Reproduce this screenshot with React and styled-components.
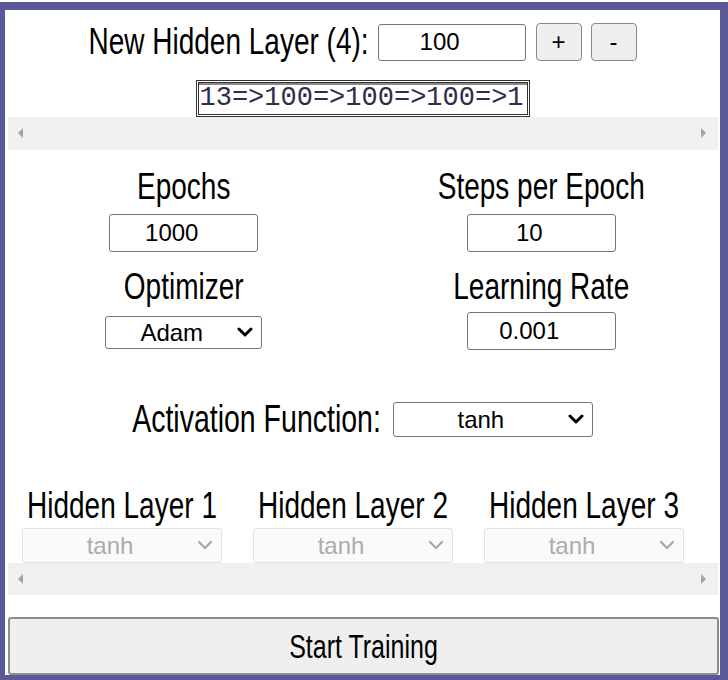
import React from "react";
import styled, { createGlobalStyle } from "styled-components";

const GlobalStyle = createGlobalStyle`
  html, body {
    margin: 0;
    padding: 0;
    background: #fff;
  }
  body {
    font-family: "Liberation Sans", Arial, sans-serif;
    color: #000;
  }
`;

const Frame = styled.div`
  box-sizing: border-box;
  margin-top: 2px;
  height: 678px;
  border-style: solid;
  border-color: #5a5896;
  border-width: 8px 8px 5px 5px;
  display: flex;
  flex-direction: column;
  overflow: hidden;
`;

// the screenshot is stretched vertically, so the text is too
const Label = styled.span`
  display: inline-block;
  font-size: ${(p) => p.$size || 28}px;
  line-height: 32px;
  white-space: nowrap;
  transform: scaleY(1.35);
  color: ${(p) => p.$color || "#000"};
`;

const TopRow = styled.div`
  display: flex;
  justify-content: center;
  align-items: center;
  margin-top: 13px;
  height: 38px;
`;

const NumberInput = styled.input`
  box-sizing: border-box;
  width: ${(p) => p.$w}px;
  height: ${(p) => p.$h}px;
  margin-left: ${(p) => p.$ml || 0}px;
  border: 1px solid #767676;
  border-radius: 3px;
  background: #fff;
  font-family: "Liberation Sans", Arial, sans-serif;
  font-size: 24px;
  color: #000;
  text-align: center;
  padding: 0 26px 0 2px;
  outline: none;
`;

const SmallButton = styled.button`
  box-sizing: border-box;
  width: 46px;
  height: 38px;
  margin-left: ${(p) => p.$ml}px;
  background: #efefef;
  border: 1.5px solid #8a8a8a;
  border-radius: 4px;
  font-family: "Liberation Sans", Arial, sans-serif;
  font-size: 24px;
  color: #000;
  padding: 0;
`;

const ArchBox = styled.div`
  box-sizing: border-box;
  margin: 19px auto 0;
  width: 334px;
  height: 37px;
  border: 3px double #333;
  box-shadow: inset 0 2px 0 #8a8a8a;
  font-family: "Liberation Mono", "Courier New", monospace;
  font-size: 27px;
  line-height: 31px;
  color: #2e2e4a;
  padding-left: 1px;
  white-space: nowrap;
  overflow: hidden;
`;

const ScrollTrack = styled.div`
  height: 33px;
  margin: 0 2px 0 3px;
  background: #f0f0f0;
  display: flex;
  justify-content: space-between;
  align-items: center;
  padding: 0 12px 0 10px;
`;

const Arrow = styled.span`
  width: 0;
  height: 0;
  border-top: 5px solid transparent;
  border-bottom: 5px solid transparent;
  ${(p) =>
    p.$dir === "left"
      ? "border-right: 5px solid #a3a3a3;"
      : "border-left: 5px solid #a3a3a3;"}
`;

const SettingsGrid = styled.div`
  display: grid;
  grid-template-columns: 1fr 1fr;
  row-gap: 19px;
  margin-top: 21px;
`;

const Field = styled.div`
  display: flex;
  flex-direction: column;
  align-items: center;
  gap: ${(p) => p.$gap}px;
`;

const ActivationRow = styled.div`
  display: flex;
  justify-content: center;
  align-items: center;
  gap: 12px;
  margin-top: 52px;
  height: 35px;
`;

const HiddenRow = styled.div`
  display: flex;
  gap: 31px;
  padding-left: 17px;
  margin-top: 53px;
`;

const HiddenCell = styled.div`
  flex: 0 0 200px;
  display: flex;
  flex-direction: column;
  align-items: center;
  gap: 6px;
`;

const SelectBox = styled.div`
  position: relative;
  width: ${(p) => p.$w}px;
  height: ${(p) => p.$h}px;
`;

const Select = styled.select`
  box-sizing: border-box;
  appearance: none;
  width: 100%;
  height: 100%;
  border: 1px solid ${(p) => (p.disabled ? "#e2e2e2" : "#767676")};
  border-radius: 3px;
  background: ${(p) => (p.disabled ? "#fafafa" : "#fff")};
  font-family: "Liberation Sans", Arial, sans-serif;
  font-size: 24px;
  color: ${(p) => (p.disabled ? "#acacac" : "#000")};
  text-align-last: center;
  padding: 0 28px 0 4px;
  outline: none;
  opacity: 1;
`;

const Chevron = styled.svg`
  position: absolute;
  right: 9px;
  top: 50%;
  transform: translateY(-50%);
  pointer-events: none;
`;

const StartButton = styled.button`
  box-sizing: border-box;
  margin: 22px 1px 0 3px;
  height: 58px;
  background: #efefef;
  border: 2px solid #8d8d8d;
  border-radius: 3px;
  font-family: "Liberation Sans", Arial, sans-serif;
  color: #000;
  padding: 0;
`;

const Dropdown = ({ w, h, value, options, disabled }) => (
  <SelectBox $w={w} $h={h}>
    <Select defaultValue={value} disabled={disabled}>
      {options.map((o) => (
        <option key={o}>{o}</option>
      ))}
    </Select>
    <Chevron width="16" height="10" viewBox="0 0 16 10">
      <polyline
        points="2,2 8,8 14,2"
        fill="none"
        stroke={disabled ? "#a8a8a8" : "#000"}
        strokeWidth={disabled ? 2.2 : 3}
        strokeLinecap="round"
        strokeLinejoin="round"
      />
    </Chevron>
  </SelectBox>
);

const FakeScrollbar = () => (
  <ScrollTrack>
    <Arrow $dir="left" />
    <Arrow $dir="right" />
  </ScrollTrack>
);

const activations = ["tanh", "relu", "sigmoid", "linear"];

const App = () => {
  const layers = [1, 2, 3];
  return (
    <>
      <GlobalStyle />
      <Frame>
        <TopRow>
          <Label>New Hidden Layer (4):</Label>
          <NumberInput $w={148} $h={37} $ml={9} defaultValue="100" />
          <SmallButton $ml={10}>+</SmallButton>
          <SmallButton $ml={9}>-</SmallButton>
        </TopRow>
        <ArchBox>13=&gt;100=&gt;100=&gt;100=&gt;1</ArchBox>
        <FakeScrollbar />

        <SettingsGrid>
          <Field $gap={11}>
            <Label>Epochs</Label>
            <NumberInput $w={149} $h={38} defaultValue="1000" />
          </Field>
          <Field $gap={11}>
            <Label>Steps per Epoch</Label>
            <NumberInput $w={149} $h={38} defaultValue="10" />
          </Field>
          <Field $gap={13}>
            <Label>Optimizer</Label>
            <Dropdown w={157} h={33} value="Adam" options={["Adam", "SGD", "RMSprop"]} />
          </Field>
          <Field $gap={9}>
            <Label>Learning Rate</Label>
            <NumberInput $w={149} $h={38} defaultValue="0.001" />
          </Field>
        </SettingsGrid>

        <ActivationRow>
          <Label $size={28.5}>Activation Function:</Label>
          <Dropdown w={200} h={35} value="tanh" options={activations} />
        </ActivationRow>

        <HiddenRow>
          {layers.map((n) => (
            <HiddenCell key={n}>
              <Label>Hidden Layer {n}</Label>
              <Dropdown w={200} h={35} value="tanh" options={activations} disabled />
            </HiddenCell>
          ))}
        </HiddenRow>
        <FakeScrollbar />

        <StartButton>
          <Label $size={25}>Start Training</Label>
        </StartButton>
      </Frame>
    </>
  );
};

export default App;
